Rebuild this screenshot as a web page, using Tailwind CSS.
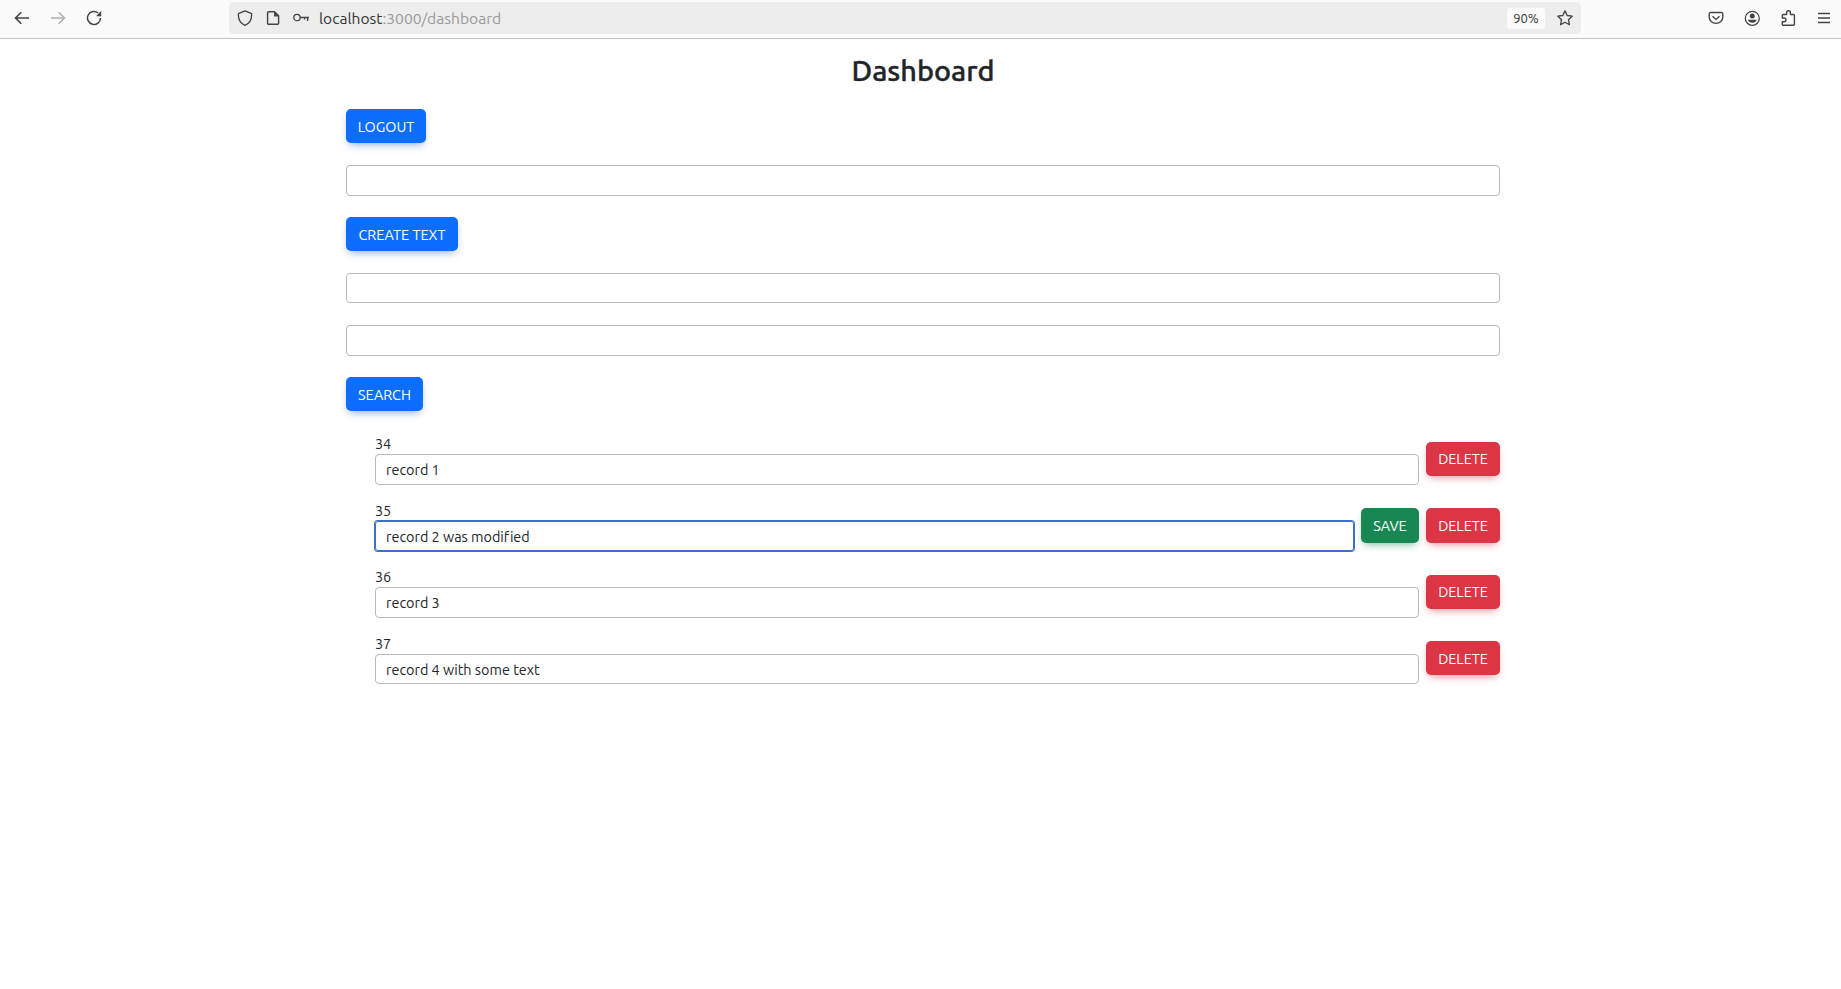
<!DOCTYPE html>
<html lang="en">
<head>
<meta charset="utf-8">
<title>Dashboard</title>
<script src="https://cdn.jsdelivr.net/npm/@tailwindcss/browser@4"></script>
</head>
<body class="h-screen overflow-hidden bg-white font-['Ubuntu','Noto_Sans',sans-serif] text-[14.4px] text-[#212529] [font-variant-ligatures:none]">
<header class="flex h-[39px] border-b border-[#c4c4c4] bg-[#fbfbfb] pl-[14px] text-[#444]">
  <nav class="flex w-[215px] gap-5 pt-[10px]">
    <svg class="size-4" viewBox="0 0 16 16" fill="none" stroke="currentColor" stroke-width="1.6"><path d="M15 8H1.800M7.300 2.200 1.500 8l5.800 5.800"/></svg>
    <svg class="size-4 text-[#b0b0b0]" viewBox="0 0 16 16" fill="none" stroke="currentColor" stroke-width="1.6"><path d="M1 8h13.200M8.700 2.200 14.500 8l-5.800 5.800"/></svg>
    <svg class="size-4" viewBox="0 0 16 16" fill="none" stroke="currentColor" stroke-width="1.5"><path d="M14.5 8A6.500 6.500 0 1 1 12.200 3"/><path d="M15.200 1v5.200H10z" fill="currentColor" stroke="none"/></svg>
  </nav>
  <div class="mt-0.5 flex h-8 w-[1352px] items-center rounded-[5px] bg-[#ededed]">
    <svg class="ml-2 size-4" viewBox="0 0 16 16" fill="none" stroke="currentColor" stroke-width="1.3"><path d="M8 .8 14.6 3.6C14.9 9 12.6 13.300 8 15.300 3.400 13.300 1.100 9 1.400 3.600z" stroke-linejoin="round"/></svg>
    <svg class="ml-3 size-4" viewBox="0 0 16 16" fill="none" stroke="currentColor" stroke-width="1.4"><path d="M3.600 1.700h6l4 4v7.600a1 1 0 0 1-1 1h-9a1 1 0 0 1-1-1V2.700a1 1 0 0 1 1-1z" stroke-linejoin="round"/><path d="M9 1.500v5h5z" fill="currentColor" stroke="none"/></svg>
    <svg class="ml-3 size-4" viewBox="0 0 16 16" fill="none" stroke="currentColor" stroke-width="1.3"><circle cx="4" cy="7.500" r="3.200"/><path d="M7.200 7.500H16M14.600 7.500v3.500M11.600 7.500v2"/></svg>
    <p class="ml-[10px] text-[15.6px] leading-[31px] text-[#999]"><span class="text-[#333]">localhost</span>:3000/dashboard</p>
    <span class="ml-auto h-[21px] w-[38px] rounded-[3px] bg-[#fbfbfb] text-center text-[13px] leading-[21px] text-[#333]">90%</span>
    <svg class="ml-3 mr-2 size-4" viewBox="0 0 16 16" fill="none" stroke="currentColor" stroke-width="1.300" stroke-linejoin="round"><path d="m8 .9 2.200 4.600 5 .7-3.700 3.500.9 5L8 12.300l-4.400 2.400.9-5L.8 6.200l5-.7z"/></svg>
  </div>
  <div class="ml-auto flex gap-5 pr-[9px] pt-[10px]">
    <svg class="size-4" viewBox="0 0 16 16" fill="none" stroke="currentColor" stroke-width="1.400"><path d="M2.500 2.500h11a1.300 1.300 0 0 1 1.300 1.300v3.400a6.800 6.200 0 0 1-13.600 0V3.800a1.300 1.300 0 0 1 1.300-1.300z"/><path d="m4.500 6.200 3.500 3.200 3.500-3.200"/></svg>
    <svg class="size-4" viewBox="0 0 16 16"><circle cx="8.300" cy="8.300" r="7" fill="none" stroke="currentColor" stroke-width="1.300"/><circle cx="8.300" cy="6" r="2.500" fill="currentColor"/><path d="M3.800 9.800h9a4.700 4 0 0 1-9 0z" fill="currentColor"/></svg>
    <svg class="size-4" viewBox="0 0 16 16" fill="none" stroke="currentColor" stroke-width="1.400" stroke-linejoin="round"><path d="M2.300 8V5.500a1 1 0 0 1 1-1h3.300V2.600a1.900 1.900 0 0 1 3.800 0v1.900h3a1 1 0 0 1 1 1v8.800a1 1 0 0 1-1 1H3.300a1 1 0 0 1-1-1v-2.600h1.800a1.800 1.800 0 0 0 0-3.700z"/></svg>
    <svg class="size-4" viewBox="0 0 16 16" stroke="currentColor" stroke-width="1.400"><path d="M2 3.500h12M2 8h12M2 12.500h12"/></svg>
  </div>
</header>
<main class="ml-[346px] w-[1154px]">
  <h1 class="h-[70px] pt-[14px] text-center text-[28.8px] font-medium leading-[34px] [-webkit-text-stroke:0.4px_#212529]">Dashboard</h1>
  <button class="block h-[34px] w-20 rounded-[5px] bg-[#0d6efd] leading-[34px] text-white shadow-[0_4px_8px_-3px_#0d49a580] pt-px">LOGOUT</button>
  <input aria-label="New text" class="mt-[22px] block h-[31px] w-full rounded-[4px] border border-[#b8b8b8] px-[10px]">
  <button class="mt-[21px] block h-[34px] w-28 rounded-[5px] bg-[#0d6efd] leading-[34px] text-white shadow-[0_4px_8px_-3px_#0d49a580] pt-px">CREATE TEXT</button>
  <input aria-label="Search from" class="mt-[22px] block h-[30px] w-full rounded-[4px] border border-[#b8b8b8] px-[10px]">
  <input aria-label="Search to" class="mt-[22px] block h-[31px] w-full rounded-[4px] border border-[#b8b8b8] px-[10px]">
  <button class="mt-[21px] block h-[34px] w-[77px] rounded-[5px] bg-[#0d6efd] leading-[34px] text-white shadow-[0_4px_8px_-3px_#0d49a580] pt-px">SEARCH</button>
  <ul class="ml-[29px] mt-[22px]">
    <li class="flex h-[67px] items-start gap-[7px]">
      <label class="flex-1"><span class="block h-[21px] leading-[22px]">34</span><input value="record 1" class="block h-[31px] w-full rounded-[4px] border border-[#b8b8b8] px-[10px]"></label>
      <button class="mt-[9px] h-[34px] w-[74px] rounded-[5px] bg-[#dc3545] leading-[34px] text-white shadow-[0_4px_8px_-3px_#dc354599]">DELETE</button>
    </li>
    <li class="flex h-[66px] items-start gap-[7px]">
      <label class="flex-1"><span class="block h-[21px] leading-[22px]">35</span><input value="record 2 was modified" class="block h-[30px] w-full rounded-[3px] border border-[#3b71ca] px-[10px] pt-px shadow-[0_0_0_1px_#3b71ca]"></label>
      <button class="mt-2 h-[35px] w-[58px] rounded-[5px] bg-[#198754] leading-[36px] text-white shadow-[0_4px_8px_-3px_#19875499]">SAVE</button>
      <button class="mt-2 h-[35px] w-[74px] rounded-[5px] bg-[#dc3545] leading-[36px] text-white shadow-[0_4px_8px_-3px_#dc354599]">DELETE</button>
    </li>
    <li class="flex h-[67px] items-start gap-[7px]">
      <label class="flex-1"><span class="block h-[21px] leading-[22px]">36</span><input value="record 3" class="block h-[31px] w-full rounded-[4px] border border-[#b8b8b8] px-[10px]"></label>
      <button class="mt-[9px] h-[34px] w-[74px] rounded-[5px] bg-[#dc3545] leading-[34px] text-white shadow-[0_4px_8px_-3px_#dc354599]">DELETE</button>
    </li>
    <li class="flex items-start gap-[7px]">
      <label class="flex-1"><span class="block h-[21px] leading-[22px]">37</span><input value="record 4 with some text" class="block h-[30px] w-full rounded-[4px] border border-[#b8b8b8] px-[10px] pt-px"></label>
      <button class="mt-2 h-[34px] w-[74px] rounded-[5px] bg-[#dc3545] leading-[34px] text-white shadow-[0_4px_8px_-3px_#dc354599] pt-px">DELETE</button>
    </li>
  </ul>
</main>
</body>
</html>
